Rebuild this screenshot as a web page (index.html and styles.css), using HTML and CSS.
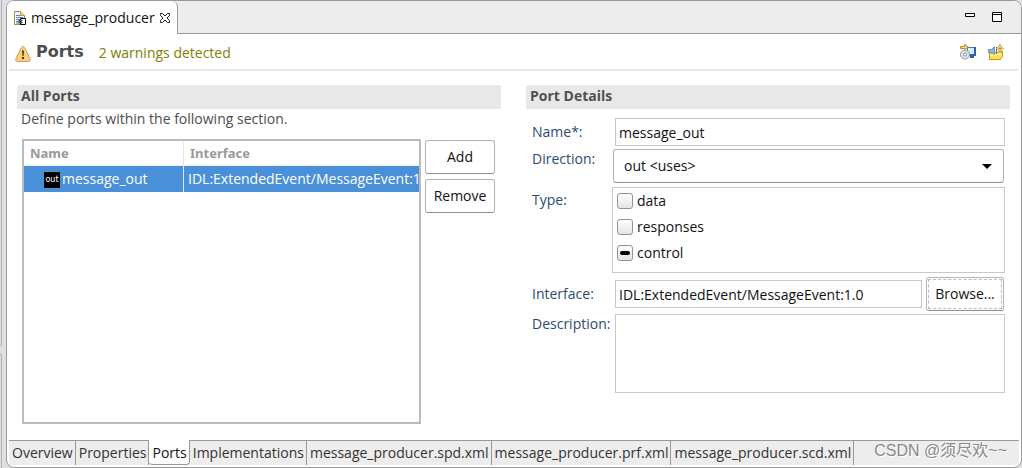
FILE: index.html
```html
<!DOCTYPE html>
<html lang="en">
<head>
<meta charset="utf-8">
<title>message_producer</title>
<link rel="stylesheet" href="styles.css">
</head>
<body>
<div class="workbench">
  <aside class="neighbour"><div class="stub stub-top"></div><div class="stub stub-bottom"></div></aside>
  <main class="editor">
    <div class="tabbar">
      <div class="tab">
        <svg class="icon" viewBox="0 0 16 16" width="16" height="16">
          <path d="M2.500 1.500h6l4 4v9h-10z" fill="#f4f8ff" stroke="#a58a3c"/>
          <path d="M8.500 1.500v4h4" fill="#f3dc8c" stroke="#b9983f"/>
          <path d="M4 5.500h4M4 7.500h7M4 9.500h4M4 11.500h3M4 13h3" stroke="#5b86c8"/>
          <path d="M8.500 8.500h5v6h-5z" fill="#fff" stroke="#000"/>
          <path d="M7 10h3v1H7zM7 12h3v1H7z" fill="#fff" stroke="#000" stroke-width=".7"/>
        </svg>
        <span>message_producer</span>
        <button class="close" aria-label="Close">
          <svg viewBox="0 0 12 12" width="12" height="12"><path d="M1.500 1.500h2L6 4l2.500-2.500h2v2L8 6l2.500 2.500v2h-2L6 8l-2.500 2.500h-2v-2L4 6 1.500 3.500z" fill="#fff" stroke="#222"/></svg>
        </button>
      </div>
      <div class="window-tools">
        <button aria-label="Minimize"><svg viewBox="0 0 12 12" width="12" height="12"><path d="M1.500 3.500h9v3h-9z" fill="#fff" stroke="#000"/></svg></button>
        <button aria-label="Maximize"><svg viewBox="0 0 12 12" width="12" height="12"><path d="M1.500 2.500h9v9h-9zM1.500 4.500h9" fill="#fff" stroke="#000"/></svg></button>
      </div>
    </div>

    <header class="form-head">
      <svg class="icon warn" viewBox="0 0 16 16" width="16" height="16">
        <path d="M8 .5q1 0 1.500 1l5.500 11q1 3-1.500 3h-11Q0 15.500 1 12.500l5.500-11Q7 .5 8 .5z" fill="#fbd07c" stroke="#cf9d5c"/>
        <path d="M7 4.500h2l-.5 5.500h-1zM7 11h2v2H7z" fill="#4a3210"/>
      </svg>
      <h1>Ports</h1>
      <a class="warnings" href="#warnings">2 warnings detected</a>
      <div class="form-tools">
        <button aria-label="Generate component">
          <svg viewBox="0 0 16 16" width="16" height="16">
            <path d="M7.500 3.500h7v7h-7z" fill="#d5ecfb" stroke="#4a7cc0"/><path d="M14 3h2v9h-2zM8 10h8v2H8zM10 12h4v2h-4z" fill="#2d62ab"/>
            <path d="M.5 4.500v-2h4v-2l4 2.500-4 2.500v-1z" fill="#f8df8c" stroke="#b88a20"/>
            <circle cx="5" cy="10.500" r="4.500" fill="#dfe0f0" stroke="#8e91b5"/><circle cx="5" cy="10.500" r="1.500" fill="#fff" stroke="#7e9b74"/>
          </svg>
        </button>
        <button aria-label="New control panel">
          <svg viewBox="0 0 16 16" width="16" height="16">
            <path d="M1.500 15.500v-6l3-1 10-1v5l-2 3z" fill="#fbe04e" stroke="#c79a25"/><path d="M2 12l3-1 9-1" stroke="#fff6b8" fill="none"/>
            <path d="M.5 5.500h3l3-3v8l-3-2h-3z" fill="#8bb0dc" stroke="#6f95c6"/><path d="M8.500 3v7" stroke="#486fa6"/>
            <path d="M12 .5l1.500 2.500 2 1.500-2 1.500L12 8.500 10.500 6l-2-1.500 2-1.500z" fill="#fff3a0" stroke="#c49a38"/><path d="M12 3v3M10.500 4.500h3" stroke="#b88a20"/>
          </svg>
        </button>
      </div>
    </header>

    <div class="columns">
      <section class="section">
        <h2>All Ports</h2>
        <p class="hint">Define ports within the following section.</p>
        <div class="ports">
          <div class="table-box">
            <table>
              <thead><tr><th class="col-name">Name</th><th>Interface</th></tr></thead>
              <tbody><tr><td class="port-name"><span class="out-icon">out</span>message_out</td><td>IDL:ExtendedEvent/MessageEvent:1.0</td></tr></tbody>
            </table>
          </div>
          <div class="actions">
            <button class="btn">Add</button>
            <button class="btn">Remove</button>
          </div>
        </div>
      </section>

      <section class="section">
        <h2>Port Details</h2>
        <div class="details">
          <label for="name">Name*:</label>
          <input class="field" id="name" type="text" value="message_out">
          <label class="top" for="direction">Direction:</label>
          <select id="direction"><option>out &lt;uses&gt;</option></select>
          <span class="label top" id="type-label">Type:</span>
          <div class="types" role="group" aria-labelledby="type-label">
            <label><input type="checkbox">data</label>
            <label><input type="checkbox">responses</label>
            <label><input type="checkbox" class="mixed" aria-checked="mixed">control</label>
          </div>
          <label for="interface">Interface:</label>
          <div class="browse-row">
            <input class="field" id="interface" type="text" value="IDL:ExtendedEvent/MessageEvent:1.0">
            <button class="btn focused">Browse...</button>
          </div>
          <label class="top" for="description">Description:</label>
          <textarea class="field" id="description"></textarea>
        </div>
      </section>
    </div>

    <nav class="pages">
      <a href="#overview">Overview</a><a href="#properties">Properties</a><a class="current" href="#ports">Ports</a><a href="#implementations">Implementations</a><a href="#spd">message_producer.spd.xml</a><a href="#prf">message_producer.prf.xml</a><a href="#scd">message_producer.scd.xml</a>
      <span class="watermark">CSDN @须尽欢~~</span>
    </nav>
  </main>
</div>
</body>
</html>
```
FILE: styles.css
```css
* { box-sizing: border-box; }
body {
  margin: 0;
  background: #e0e0e0;
  color: #111;
  font: 14px/18px "Open Sans", "Noto Sans CJK SC", sans-serif;
}
button, input, select, textarea { font: inherit; color: inherit; margin: 0; }
button { padding: 0; border: 0; background: none; }
svg { display: block; }
a { color: inherit; text-decoration: none; }
h1, h2, p { margin: 0; }

.workbench { display: flex; height: 100vh; }
.neighbour { width: 6px; display: flex; flex-direction: column; gap: 8px; }
.stub { width: 2px; border-right: 1px solid #b0b0b0; }
.stub-top { flex: 346; border-radius: 0 0 4px 0; border-bottom: 1px solid #b0b0b0; }
.stub-bottom { flex: 114; border-radius: 0 4px 0 0; border-top: 1px solid #b0b0b0; }

.editor {
  flex: 1;
  min-width: 0;
  display: flex;
  flex-direction: column;
  background: #fff;
  border: 1px solid #999;
  border-radius: 8px;
  overflow: hidden;
}
.tabbar { display: flex; justify-content: space-between; height: 33px; background: #ededed; box-shadow: inset 0 -1px #999; }
.tab {
  display: flex;
  align-items: center;
  padding: 1px 6px 0 5px;
  background: #fff;
  border-right: 1px solid #999;
  border-radius: 0 6px 0 0;
}
.tab .icon { margin-right: 3px; }
.close { margin-left: 4px; }
.window-tools { display: flex; align-items: flex-start; gap: 15px; padding: 9px 18px 0 0; }

.form-head {
  display: flex;
  align-items: center;
  height: 37px;
  margin: 0 3px 0 2px;
  padding: 0 14px 0 6px;
  border-bottom: 2px solid #e6e6e6;
}
.warn { margin-top: 4px; }
h1 { margin: 0 15px 0 5px; color: #4d4d4d; font: bold 16px/20px "DejaVu Sans", sans-serif; }
.warnings { color: #808000; padding-top: 3px; }
.form-tools { display: flex; gap: 12px; margin-left: auto; }

.columns { flex: 1; display: grid; grid-template-columns: 1fr 1fr; gap: 25px; padding: 14px 11px 16px 10px; }
.section { min-width: 0; display: flex; flex-direction: column; }
h2 { padding: 1px 4px 3px; height: 24px; background: #e8e8e8; border-radius: 3px 3px 0 0; color: #505050; font: bold 14px/20px "Open Sans", sans-serif; }
.hint { padding: 1px 4px 0; color: #4d4d4d; }
.ports { flex: 1; display: flex; gap: 4px; padding: 11px 6px 0 5px; }
.table-box { flex: 1; min-width: 0; border: 2px solid #bbb; overflow: hidden; }
table { width: 100%; border-collapse: separate; border-spacing: 0; table-layout: fixed; }
th, td { padding: 0 4px; text-align: left; white-space: nowrap; overflow: hidden; }
th { height: 25px; padding: 0 6px; color: #999; border-bottom: 1px solid #eee; font: bold 13px/18px "Noto Sans", sans-serif; }
.col-name { width: 160px; }
th:first-child, td:first-child { border-right: 1px solid #e6e6e6; }
td { height: 26px; padding-right: 0; background: #4a90d9; color: #fff; }
.port-name { padding: 0 0 0 20px; }
.out-icon { display: inline-block; width: 16px; height: 16px; margin-right: 2px; background: #000; color: #fff; font: 8px/15px "DejaVu Sans", sans-serif; text-align: center; vertical-align: middle; }
.actions { display: flex; flex-direction: column; gap: 5px; width: 70px; padding-top: 1px; }
.btn { height: 34px; background: #fff; border: 1px solid #b4b4b0; border-bottom-color: #8f8f88; border-radius: 3px; }

.details { display: grid; grid-template-columns: 76px 1fr; column-gap: 7px; padding: 9px 5px 0 6px; }
.details > label, .label { color: #2c4a72; align-self: center; white-space: nowrap; }
.details > .top { align-self: start; padding-top: 4px; }
.field { width: 100%; min-width: 0; height: 28px; padding: 0 3px; background: #fff; border: 1px solid #c8c8c8; border-radius: 0; outline: 0; }
select {
  height: 34px;
  margin: 3px 1px 4px -2px;
  padding: 0 10px;
  appearance: none;
  border: 1px solid #b4b4b0;
  border-bottom-color: #8f8f88;
  border-radius: 3px;
  background: #fff url("data:image/svg+xml,%3Csvg xmlns='http://www.w3.org/2000/svg' width='10' height='5'%3E%3Cpath d='M0 0h10L5 5z'/%3E%3C/svg%3E") no-repeat right 11px center / 10px 5px;
}
.types { display: flex; flex-direction: column; height: 86px; margin: 0 0 4px -3px; padding: 0 4px; border: 1px solid #c8c8c8; }
.types label { display: flex; align-items: center; gap: 4px; height: 26px; }
.types input {
  appearance: none;
  width: 16px;
  height: 16px;
  border: 1px solid #95958f;
  border-radius: 3px;
  background: linear-gradient(#fff, #e4e4e4);
  display: grid;
  place-items: center;
}
.types .mixed::before { content: ""; width: 10px; height: 4px; border-radius: 2px; background: #000; }
.browse-row { display: flex; align-items: center; gap: 4px; padding-right: 1px; }
.browse-row .field { flex: 1; }
.browse-row .btn { width: 78px; }
.focused { outline: 1px dashed #bbb; outline-offset: -3px; }
textarea.field { height: 79px; margin-top: 3px; resize: none; display: block; }

.pages { position: relative; display: flex; height: 25px; margin: 0 2px 2px; border-top: 1px solid #999; background: #ededed; color: #333; }
.pages a { padding: 3px 2px 0 3px; border-right: 1px solid #999; white-space: nowrap; }
.pages .current { margin-top: -1px; padding-top: 4px; background: #fff; color: #111; border-bottom: 1px solid #999; border-radius: 0 0 4px 4px; }
.watermark { position: absolute; right: 12px; top: 0; color: #8a8a8a; font: 16px/20px "Liberation Sans", "Noto Sans CJK SC", sans-serif; text-shadow: 1px 1px #fff; }
```
